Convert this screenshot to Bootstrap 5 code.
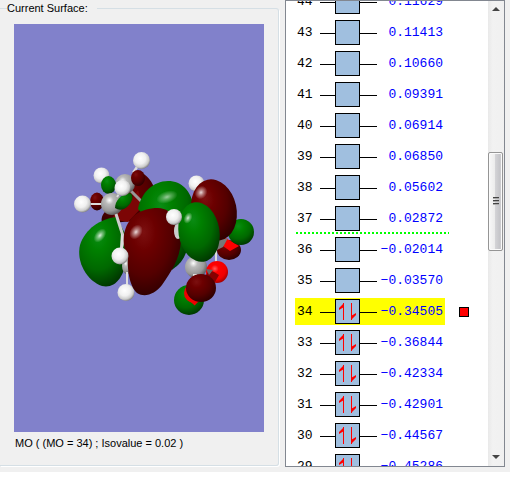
<!DOCTYPE html>
<html lang="en">
<head>
<meta charset="utf-8">
<meta name="viewport" content="width=device-width, initial-scale=1">
<title>Molecular Orbitals</title>
<link href="https://cdn.jsdelivr.net/npm/bootstrap@5.3.0/dist/css/bootstrap.min.css" rel="stylesheet">
<style>
  body { font-family: "Liberation Sans", Arial, sans-serif; font-size: 11px; line-height: 16px; color: #000; background: #fff; }
  .mo-window { height: calc(100vh - 6px); background: #f0f0f0; padding: 0 5px 5px 0; gap: 6px; }
  .surface-group { border: 1px solid #d5dfe5; border-left: 0; border-radius: 0 3px 3px 0; box-shadow: 1px 1px 0 #fff; padding: 0 14px 14px; margin-bottom: 1px; }
  .surface-group legend { float: none; width: auto; font-size: 11px; line-height: 16px; margin: 0 0 0 -7px; padding: 0 9px 0 0; }
  .surface-layout { height: 100%; gap: 3px; }
  .scene { background: #8181cb; min-height: 0; margin-top: 8px; }
  .surface-caption { padding-left: 1px; }
  .orbital-panel { flex: 0 0 220px; border: 1px solid #828790; background: #fff; }
  .orbital-list { padding-left: 9px; margin-top: -15px; }
  .orbital-table { font-family: "Liberation Mono", "Courier New", monospace; font-size: 13px; line-height: 25px; border-collapse: collapse; }
  .orbital-table th, .orbital-table td { padding: 3px 0; height: 31px; font-weight: normal; vertical-align: middle; }
  .orbital-table .mo-number { width: 25px; padding-left: 2px; }
  .orbital-table .mo-shape { width: 57px; }
  .orbital-table .mo-energy { width: 68px; padding-right: 2px; text-align: right; color: #00f; }
  .orbital-table .mo-pick { padding-left: 14px; width: 24px; }
  .homo-lumo-gap { background: repeating-linear-gradient(90deg, #0f0 0 2px, transparent 2px 4px) 1px 100% / 153px 2px no-repeat; }
  .is-current { background: linear-gradient(#ff0, #ff0) 0 2px / 150px 27px no-repeat; }
  .pick-mark { width: 10px; height: 10px; background: #f00; border: 1px solid #000; }
  .scroller { flex: 0 0 16px; background: linear-gradient(90deg, #e9e9e9, #f2f2f2 30%, #f0f0f0); }
  .scroller button { border: 0; background: none; height: 17px; padding: 0; }
  .scroller .thumb { border: 1px solid #959595; border-radius: 2px; background: linear-gradient(90deg, #f8f8f8, #ececec 45%, #d3d3d6 50%, #c4c4c8 85%, #e0e0e0); box-shadow: inset 0 0 0 1px #fafafa; margin-right: 1px; flex: 97 1 0; }
  .space-above { flex: 135 1 0; }
  .space-below { flex: 199 1 0; }
</style>
<script src="https://cdn.jsdelivr.net/npm/bootstrap@5.3.0/dist/js/bootstrap.bundle.min.js"></script>
</head>
<body>
<svg class="d-none" aria-hidden="true">
  <symbol id="orb-empty" viewBox="0 0 57 25"><path d="M0 13.5H15M40 13.5H57" stroke="#000"/><rect x="15.500" y=".5" width="24" height="24" fill="#a0bfdf" stroke="#000"/></symbol>
  <symbol id="orb-full" viewBox="0 0 57 25"><path d="M0 13.500H15M40 13.500H57" stroke="#000"/><rect x="15.500" y=".5" width="24" height="24" fill="#a0bfdf" stroke="#000"/><path d="M23.500 4V21M31.500 4V21" stroke="#f00"/><path d="M24 4V8L19 11V9ZM31 21V17L36 14V16Z" fill="#f00"/></symbol>
</svg>
<main class="mo-window d-flex">
  <fieldset class="surface-group flex-grow-1">
    <legend>Current Surface:</legend>
    <div class="surface-layout d-flex flex-column">
      <svg class="scene flex-grow-1 w-100" viewBox="14 24 250 408" preserveAspectRatio="xMidYMid slice" role="img" aria-label="Molecular orbital 34">
        <defs>
          <radialGradient id="hyd" cx=".42" cy=".38" r=".64"><stop offset="0" stop-color="#fff"/><stop offset=".5" stop-color="#f0f0f0"/><stop offset=".8" stop-color="#ccc"/><stop offset="1" stop-color="#7c7c7c"/></radialGradient>
          <radialGradient id="carb" cx=".38" cy=".33" r=".75"><stop offset="0" stop-color="#fff"/><stop offset=".25" stop-color="#bbb"/><stop offset=".65" stop-color="#999"/><stop offset="1" stop-color="#484848"/></radialGradient>
          <radialGradient id="oxy" cx=".4" cy=".35" r=".7"><stop offset="0" stop-color="#ff5a5a"/><stop offset=".25" stop-color="#f00"/><stop offset=".7" stop-color="#f00000"/><stop offset="1" stop-color="#900"/></radialGradient>
          <radialGradient id="grn" cx=".4" cy=".28" r=".8"><stop offset="0" stop-color="#0a8c14"/><stop offset=".25" stop-color="#008000"/><stop offset=".6" stop-color="#006800"/><stop offset="1" stop-color="#002c00"/></radialGradient>
          <radialGradient id="dred" cx=".35" cy=".28" r=".82"><stop offset="0" stop-color="#7c1010"/><stop offset=".25" stop-color="#6c0000"/><stop offset=".6" stop-color="#540000"/><stop offset="1" stop-color="#240000"/></radialGradient>
          <radialGradient id="shine"><stop offset="0" stop-color="#fff" stop-opacity=".85"/><stop offset=".4" stop-color="#fff" stop-opacity=".45"/><stop offset="1" stop-color="#fff" stop-opacity="0"/></radialGradient>
        </defs>
        <path d="M139 164L133 173" stroke="#ddd" stroke-width="2.500"/>
        <circle cx="101.500" cy="175.500" r="8" fill="url(#hyd)"/>
        <path d="M133 178C139 168 149 175 154 187C158 198 153 214 142 220L103 224C98 216 108 207 120 201Z" fill="url(#dred)"/>
        <path d="M118 207Q130 203 138 190L143 206L128 222L112 219Z" fill="#7c0505"/>
        <path d="M128 188L146 206" stroke="#999" stroke-width="3"/>
        <circle cx="125" cy="184" r="10" fill="url(#carb)"/>
        <ellipse cx="138" cy="178" rx="7" ry="8" fill="url(#dred)"/>
        <circle cx="141.500" cy="160.500" r="8.500" fill="url(#hyd)"/>
        <!-- central rear lobe -->
        <path d="M138 209C141 193 153 181 168 181C182 181 191 191 194 207L188 246C184 262 178 265 172 270L158 230Z" fill="url(#grn)"/>
        <ellipse cx="167" cy="197" rx="11" ry="6" transform="rotate(-18 167 197)" fill="url(#shine)" opacity=".7"/>
        <!-- left side atoms -->
        <ellipse cx="97" cy="201.500" rx="7" ry="9" fill="url(#dred)"/>
        <path d="M90 204H104" stroke="#ddd" stroke-width="2"/>
        <circle cx="82.500" cy="204" r="8.500" fill="url(#hyd)"/>
        <ellipse cx="108.500" cy="185" rx="7.500" ry="9" fill="url(#grn)"/>
        <circle cx="112" cy="204" r="11" fill="url(#carb)"/>
        <path d="M115 208C115 201 121 194 130 193C135 195 132 205 124 209Q119 211 115 208Z" fill="url(#grn)"/>
        <path d="M117 197L121 191" stroke="#ddd" stroke-width="2"/>
        <circle cx="122.500" cy="188" r="8" fill="url(#hyd)"/>
        <path d="M116 217C100 219 85 229 80 245C76 262 87 281 102 286C115 289 124 277 126 260L127 237Z" fill="url(#grn)"/>
        <ellipse cx="100" cy="235.500" rx="8" ry="5" transform="rotate(-52 100 235.500)" fill="url(#shine)"/>
        <path d="M116 214L124 239L129 250" fill="none" stroke="#ccc" stroke-width="3"/>
        <path d="M121 233L125 239L123 248L120 248" fill="#ddd"/>
        <ellipse cx="127" cy="266" rx="5" ry="8" fill="url(#carb)"/>
        <path d="M127 272V286" stroke="#ddd" stroke-width="2"/>
        <circle cx="126" cy="292.500" r="8.500" fill="url(#hyd)"/>
        <!-- central front lobe -->
        <path d="M124 235C127 217 140 208 158 208C174 209 180 222 181 241C180 260 170 273 162 285C155 294 145 298 137 293C129 286 127 267 128 257C124 250 123 242 124 235Z" fill="url(#dred)"/>
        <ellipse cx="136" cy="232" rx="6" ry="8" transform="rotate(35 136 232)" fill="url(#shine)"/>
        <circle cx="120" cy="256" r="8.500" fill="url(#hyd)"/>
        <!-- right side lobes and atoms -->
        <ellipse cx="229" cy="250" rx="12" ry="10" fill="url(#dred)"/>
        <path d="M224 237L239 246L230 251L223 246Z" fill="#f00"/>
        <circle cx="241" cy="232" r="13" fill="url(#grn)"/>
        <path d="M218 240L228 238L223 247L217 250Z" fill="#777"/>
        <circle cx="196.500" cy="183.500" r="8" fill="url(#hyd)"/>
        <ellipse cx="214" cy="210" rx="22.500" ry="31" transform="rotate(-12 214 210)" fill="url(#dred)"/>
        <ellipse cx="201" cy="192.500" rx="6" ry="7" transform="rotate(35 201 192.500)" fill="url(#shine)"/>
        <ellipse cx="178" cy="231" rx="4" ry="8" fill="#ccc"/>
        <path d="M216 240V264" stroke="#ddd" stroke-width="2"/>
        <circle cx="196" cy="267" r="11" fill="url(#carb)"/>
        <ellipse cx="199" cy="232" rx="20.500" ry="30" transform="rotate(-9 199 232)" fill="url(#grn)"/>
        <ellipse cx="188" cy="218" rx="4" ry="6" transform="rotate(25 188 218)" fill="url(#shine)"/>
        <circle cx="174" cy="217" r="8" fill="url(#hyd)"/>
        <circle cx="217" cy="272" r="11" fill="url(#oxy)"/>
        <path d="M209 270L214 272L219 275L215 282L209 279L205 277Z" fill="#850000"/>
        <path d="M206 269L213 270L209 275Z" fill="#666"/>
        <circle cx="189" cy="300" r="15" fill="url(#grn)"/>
        <circle cx="194" cy="293" r="10" fill="#ef0000"/>
        <path d="M187 294L197 303" stroke="#ef0000" stroke-width="7"/>
        <path d="M193 275H197" stroke="#ddd" stroke-width="2"/>
        <ellipse cx="201" cy="288" rx="15" ry="14" fill="url(#dred)"/>
      </svg>
      <div class="surface-caption">MO ( (MO = 34) ; Isovalue = 0.02 )</div>
    </div>
  </fieldset>
  <section class="orbital-panel d-flex overflow-hidden" aria-label="Orbitals">
    <div class="orbital-list flex-grow-1">
      <table class="orbital-table">
        <tbody>
          <tr><th class="mo-number" scope="row">44</th><td class="mo-shape"><svg class="d-block" width="57" height="25"><use href="#orb-empty"/></svg></td><td class="mo-energy">0.11629</td><td class="mo-pick"></td></tr>
          <tr><th class="mo-number" scope="row">43</th><td class="mo-shape"><svg class="d-block" width="57" height="25"><use href="#orb-empty"/></svg></td><td class="mo-energy">0.11413</td><td class="mo-pick"></td></tr>
          <tr><th class="mo-number" scope="row">42</th><td class="mo-shape"><svg class="d-block" width="57" height="25"><use href="#orb-empty"/></svg></td><td class="mo-energy">0.10660</td><td class="mo-pick"></td></tr>
          <tr><th class="mo-number" scope="row">41</th><td class="mo-shape"><svg class="d-block" width="57" height="25"><use href="#orb-empty"/></svg></td><td class="mo-energy">0.09391</td><td class="mo-pick"></td></tr>
          <tr><th class="mo-number" scope="row">40</th><td class="mo-shape"><svg class="d-block" width="57" height="25"><use href="#orb-empty"/></svg></td><td class="mo-energy">0.06914</td><td class="mo-pick"></td></tr>
          <tr><th class="mo-number" scope="row">39</th><td class="mo-shape"><svg class="d-block" width="57" height="25"><use href="#orb-empty"/></svg></td><td class="mo-energy">0.06850</td><td class="mo-pick"></td></tr>
          <tr><th class="mo-number" scope="row">38</th><td class="mo-shape"><svg class="d-block" width="57" height="25"><use href="#orb-empty"/></svg></td><td class="mo-energy">0.05602</td><td class="mo-pick"></td></tr>
          <tr class="homo-lumo-gap"><th class="mo-number" scope="row">37</th><td class="mo-shape"><svg class="d-block" width="57" height="25"><use href="#orb-empty"/></svg></td><td class="mo-energy">0.02872</td><td class="mo-pick"></td></tr>
          <tr><th class="mo-number" scope="row">36</th><td class="mo-shape"><svg class="d-block" width="57" height="25"><use href="#orb-empty"/></svg></td><td class="mo-energy">−0.02014</td><td class="mo-pick"></td></tr>
          <tr><th class="mo-number" scope="row">35</th><td class="mo-shape"><svg class="d-block" width="57" height="25"><use href="#orb-empty"/></svg></td><td class="mo-energy">−0.03570</td><td class="mo-pick"></td></tr>
          <tr class="is-current"><th class="mo-number" scope="row">34</th><td class="mo-shape"><svg class="d-block" width="57" height="25"><use href="#orb-full"/></svg></td><td class="mo-energy">−0.34505</td><td class="mo-pick"><div class="pick-mark"></div></td></tr>
          <tr><th class="mo-number" scope="row">33</th><td class="mo-shape"><svg class="d-block" width="57" height="25"><use href="#orb-full"/></svg></td><td class="mo-energy">−0.36844</td><td class="mo-pick"></td></tr>
          <tr><th class="mo-number" scope="row">32</th><td class="mo-shape"><svg class="d-block" width="57" height="25"><use href="#orb-full"/></svg></td><td class="mo-energy">−0.42334</td><td class="mo-pick"></td></tr>
          <tr><th class="mo-number" scope="row">31</th><td class="mo-shape"><svg class="d-block" width="57" height="25"><use href="#orb-full"/></svg></td><td class="mo-energy">−0.42901</td><td class="mo-pick"></td></tr>
          <tr><th class="mo-number" scope="row">30</th><td class="mo-shape"><svg class="d-block" width="57" height="25"><use href="#orb-full"/></svg></td><td class="mo-energy">−0.44567</td><td class="mo-pick"></td></tr>
          <tr><th class="mo-number" scope="row">29</th><td class="mo-shape"><svg class="d-block" width="57" height="25"><use href="#orb-full"/></svg></td><td class="mo-energy">−0.45286</td><td class="mo-pick"></td></tr>
        </tbody>
      </table>
    </div>
    <div class="scroller d-flex flex-column">
      <button type="button" aria-label="Scroll up"><svg class="d-block mx-auto" width="8" height="5"><path d="M4 0L8 4H0Z" fill="#444"/></svg></button>
      <div class="space-above"></div>
      <div class="thumb d-flex align-items-center justify-content-center"><svg width="6" height="9"><path d="M0 .5H6M0 3.500H6M0 6.500H6" stroke="#444"/><path d="M0 1.500H6M0 4.500H6M0 7.500H6" stroke="#aaa"/></svg></div>
      <div class="space-below"></div>
      <button type="button" aria-label="Scroll down"><svg class="d-block mx-auto" width="8" height="5"><path d="M0 0H8L4 4Z" fill="#444"/></svg></button>
    </div>
  </section>
</main>
</body>
</html>
